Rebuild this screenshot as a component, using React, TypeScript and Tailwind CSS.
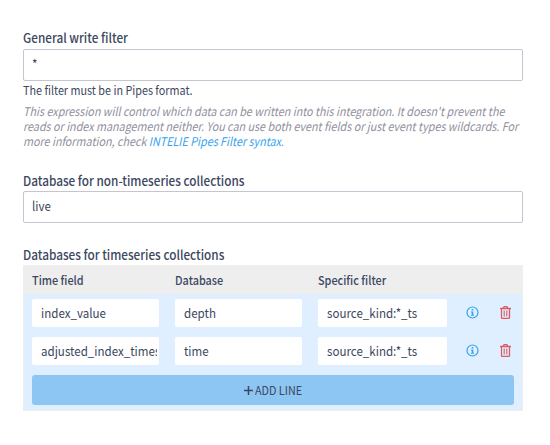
import React from "react";

const rows = [
  { field: "index_value", database: "depth", filter: "source_kind:*_ts" },
  { field: "adjusted_index_timestamp", database: "time", filter: "source_kind:*_ts" },
];

function InfoIcon() {
  return (
    <svg width="13" height="13" viewBox="0 0 13 13" fill="none" className="text-[#36a3ee]">
      <circle cx="6.5" cy="6.5" r="5.5" stroke="currentColor" strokeWidth="1.2" />
      <path d="M5.7 3h1.6v1.5H5.7zM5 5.4h2.3v3.3H8v1.1H5V8.7h.7V6.5H5z" fill="currentColor" />
    </svg>
  );
}

function TrashIcon() {
  return (
    <svg width="11" height="13" viewBox="0 0 11 13" fill="none" stroke="currentColor" className="text-[#dc5c64]">
      <path d="M0 2.5h11M3.2 2.3l.6-1.4q.1-.3.5-.3h2.4q.4 0 .5.3l.6 1.4M1.5 2.5v9.1q0 .8.8.8h6.4q.8 0 .8-.8V2.5" strokeWidth="1.3" />
      <path d="M4.2 4.5v6M6.8 4.5v6" strokeWidth="1.1" />
    </svg>
  );
}

function Label({ children }: { children: React.ReactNode }) {
  return (
    <div className="origin-left scale-x-[0.905] text-[13px] leading-[22px] font-medium whitespace-nowrap">{children}</div>
  );
}

function Cell({ value }: { value: string }) {
  return (
    <div className="h-7 rounded-[2px] bg-white pr-[2px] pl-[9px] text-[13px] leading-7">
      <div className="h-7 overflow-hidden whitespace-nowrap">
        <span className="inline-block origin-left scale-x-[0.89]">{value}</span>
      </div>
    </div>
  );
}

export default function App() {
  return (
    <main className="h-[445px] w-[550px] overflow-hidden bg-white px-[23px] pt-[27px] font-['Noto_Sans_CJK_SC',sans-serif] text-[#3c4760]">
      <div className="w-[500px]">
        <Label>General write filter</Label>
        <div className="h-8 rounded-[2px] border border-[#c5c5d2] px-2 text-[13px] leading-[28px]">
          <span className="inline-block origin-left scale-x-[0.89]">*</span>
        </div>
        <div className="h-[18px] origin-left scale-x-[0.9] text-[12px] leading-[18px] whitespace-nowrap">The filter must be in Pipes format.</div>
        <div className="mt-[4px] h-[45px] origin-left scale-x-[0.897] text-[12px] leading-[15px] whitespace-nowrap text-[#8f8f9d] italic">
          <div>This expression will control which data can be written into this integration. It doesn't prevent the</div>
          <div>reads or index management neither. You can use both event fields or just event types wildcards. For</div>
          <div>more information, check <span className="text-[#36a3ee]">INTELIE Pipes Filter syntax</span>.</div>
        </div>
        <div className="mt-[22px]">
          <Label>Database for non-timeseries collections</Label>
          <div className="-mt-px h-8 rounded-[2px] border border-[#c5c5d2] px-2 text-[13px] leading-[28px]">
            <span className="inline-block origin-left scale-x-[0.89]">live</span>
          </div>
        </div>
        <div className="mt-[21px]">
          <Label>Databases for timeseries collections</Label>
          <div className="-mt-px h-[146px] border border-[#eeeeee] bg-[#e0efff]">
            <div className="grid h-[28px] grid-cols-[143px_143px_1fr] bg-[#eeeeee] pl-2 text-[12px] leading-[28px] font-medium">
              <div className="origin-left scale-x-[0.905]">Time field</div>
              <div className="origin-left scale-x-[0.905]">Database</div>
              <div className="origin-left scale-x-[0.905]">Specific filter</div>
            </div>
            <div className="flex flex-col gap-[10px] px-2 pt-[5px]">
              {rows.map((row) => (
                <div key={row.field} className="grid grid-cols-[127px_127px_129px_13px_11px] items-start gap-x-4">
                  <Cell value={row.field} />
                  <Cell value={row.database} />
                  <Cell value={row.filter} />
                  <div className="mt-[7px] ml-[3px]"><InfoIcon /></div>
                  <div className="mt-[7px] ml-[8px]"><TrashIcon /></div>
                </div>
              ))}
              <div className="flex h-[30px] items-center justify-center gap-[2px] rounded-[3px] bg-[#8dc5f3] text-[12px] leading-[30px]">
                <svg width="9" height="9" viewBox="0 0 9 9" stroke="currentColor" strokeWidth="1.5">
                  <path d="M4.5 0v9M0 4.5h9" />
                </svg>
                <span className="w-[47px] whitespace-nowrap">
                  <span className="inline-block origin-left scale-x-[0.9]">ADD LINE</span>
                </span>
              </div>
            </div>
          </div>
        </div>
      </div>
    </main>
  );
}
